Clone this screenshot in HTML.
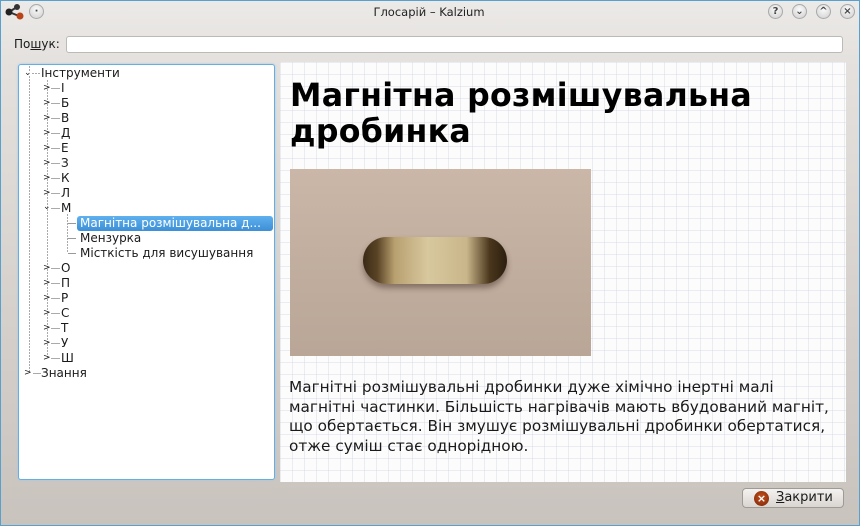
<!DOCTYPE html>
<html><head><meta charset="utf-8"><style>
*{margin:0;padding:0;box-sizing:border-box}
body{width:860px;height:526px;overflow:hidden;font-family:"DejaVu Sans","Liberation Sans",sans-serif;font-size:12px;color:#1a1a1a;position:relative;
background:linear-gradient(#eceae8 0px,#e4e1de 60px,#d6d1cd 300px,#c9c3be 526px)}
.frame{left:0;top:0;width:860px;height:526px;border:1px solid #5aa0cc;pointer-events:none;z-index:9}
.abs{position:absolute}
.tb{top:0;left:0;width:858px;height:24px;text-align:center;line-height:24px;font-size:11.5px;color:#222}
.wb{width:15px;height:15px;border-radius:50%;background:radial-gradient(circle at 50% 35%,#fafafa,#cfcfcf);border:1px solid #a9a9a9;top:4px;font-size:10px;line-height:13px;text-align:center;color:#444;font-weight:bold}
.search{left:66px;top:36px;width:777px;height:17px;background:#fff;border:1px solid #bdb9b5;border-radius:3px}
.tree{left:18px;top:64px;width:257px;height:416px;background:#fff;border:1px solid #67aee0;border-radius:3px;box-shadow:0 0 2px #9cc9ea}
.in{position:absolute;left:0;top:1px;width:255px;height:414px}
.row{position:absolute;height:15px;line-height:15px;font-size:12px;white-space:nowrap}
.arr{position:absolute;font-size:9px;color:#222;line-height:15px}
.sel{background:linear-gradient(#5fb0ee,#3d8fd6);color:#fff;border-radius:3px;padding:0 3px}
.content{left:280px;top:62px;width:566px;height:420px;background-color:#fcfcfd;
background-image:linear-gradient(90deg,rgba(210,210,225,.4) 1px,transparent 1px),linear-gradient(rgba(210,210,225,.4) 1px,transparent 1px);background-size:12px 12px}
h1{position:absolute;left:10px;top:16px;font-size:31.6px;line-height:36px;font-weight:bold;color:#000;font-family:"DejaVu Sans",sans-serif;letter-spacing:0.3px;white-space:nowrap}
.img{left:10px;top:107px;width:301px;height:187px;background:linear-gradient(#cbb7a8,#c1ae9f 50%,#b9a697);overflow:hidden}
.pill{left:73px;top:68px;width:144px;height:47px;border-radius:24px;background:linear-gradient(90deg,#3a2a16 0%,#5a4426 10%,#b8a070 22%,#d8c89e 45%,#c9b68a 72%,#4a361c 88%,#2b1f10 100%);box-shadow:0 4px 6px rgba(60,40,30,.45)}
p{position:absolute;left:9px;top:316px;font-size:15.3px;line-height:19.5px;color:#1a1a1a;white-space:nowrap}
.btn{left:742px;top:488px;width:102px;height:20px;border:1px solid #a09a95;border-radius:4px;background:linear-gradient(#f4f2f0,#d9d5d1);font-size:13px;line-height:18px}
.xi{left:11px;top:2px;width:15px;height:15px;border-radius:50%;background:radial-gradient(circle at 50% 40%,#c5501c,#7a2508);color:#fff;font-size:11px;line-height:15px;text-align:center;font-weight:bold}
</style></head><body>
<div class="abs frame"></div>
<div class="abs tb">Глосарій – Kalzium</div>
<svg class="abs" style="left:5px;top:3px" width="20" height="18"><line x1="4" y1="9" x2="12" y2="4" stroke="#333" stroke-width="2"/><line x1="4" y1="9" x2="14" y2="13" stroke="#333" stroke-width="2"/><circle cx="4" cy="9" r="3.5" fill="#222"/><circle cx="12" cy="4" r="3" fill="#333"/><circle cx="15" cy="13" r="3.5" fill="#b84418"/></svg>
<div class="abs wb" style="left:29px">·</div>
<div class="abs wb" style="left:768px">?</div>
<div class="abs wb" style="left:792px">⌄</div>
<div class="abs wb" style="left:816px">^</div>
<div class="abs wb" style="left:840px">×</div>
<div class="abs" style="left:14px;top:37px;font-size:12px">По<u>ш</u>ук:</div>
<div class="abs search"></div>
<div class="abs tree"><div class="in">
<svg class="abs" style="left:0;top:0" width="257" height="416">
<g stroke="#aaa" stroke-dasharray="2,1" fill="none">
<line x1="10.5" y1="0" x2="10.5" y2="6"/>
<line x1="13" y1="7.5" x2="22" y2="7.5"/>
<line x1="28.5" y1="14" x2="28.5" y2="293"/>
<line x1="10.5" y1="10" x2="10.5" y2="306"/>
<line x1="48.5" y1="148" x2="48.5" y2="186"/>
</g>
<g stroke="#999" fill="none">
<path d="M49 157.5h8M49 172.5h8M49 187.5h8"/>
</g>
<g stroke="#aaa">
<path d="M32 22.5h9M32 37.5h9M32 52.5h9M32 67.5h9M32 82.5h9M32 97.5h9M32 112.5h9M32 127.5h9M32 142.5h9M32 202.5h9M32 217.5h9M32 232.5h9M32 247.5h9M32 262.5h9M32 277.5h9M32 292.5h9M14 307.5h8"/>
</g>
</svg>
<div class="arr" style="left:5px;top:0">⌄</div>
<div class="row" style="left:22px;top:0">Інструменти</div>
<div class="arr" style="left:24px;top:15px">&gt;</div><div class="row" style="left:42px;top:15px">І</div>
<div class="arr" style="left:24px;top:30px">&gt;</div><div class="row" style="left:42px;top:30px">Б</div>
<div class="arr" style="left:24px;top:45px">&gt;</div><div class="row" style="left:42px;top:45px">В</div>
<div class="arr" style="left:24px;top:60px">&gt;</div><div class="row" style="left:42px;top:60px">Д</div>
<div class="arr" style="left:24px;top:75px">&gt;</div><div class="row" style="left:42px;top:75px">Е</div>
<div class="arr" style="left:24px;top:90px">&gt;</div><div class="row" style="left:42px;top:90px">З</div>
<div class="arr" style="left:24px;top:105px">&gt;</div><div class="row" style="left:42px;top:105px">К</div>
<div class="arr" style="left:24px;top:120px">&gt;</div><div class="row" style="left:42px;top:120px">Л</div>
<div class="arr" style="left:24px;top:134px">⌄</div><div class="row" style="left:42px;top:135px">М</div>
<div class="row sel" style="left:58px;top:150px;width:196px">Магнітна розмішувальна д...</div>
<div class="row" style="left:61px;top:165px">Мензурка</div>
<div class="row" style="left:61px;top:180px">Місткість для висушування</div>
<div class="arr" style="left:24px;top:195px">&gt;</div><div class="row" style="left:42px;top:195px">О</div>
<div class="arr" style="left:24px;top:210px">&gt;</div><div class="row" style="left:42px;top:210px">П</div>
<div class="arr" style="left:24px;top:225px">&gt;</div><div class="row" style="left:42px;top:225px">Р</div>
<div class="arr" style="left:24px;top:240px">&gt;</div><div class="row" style="left:42px;top:240px">С</div>
<div class="arr" style="left:24px;top:255px">&gt;</div><div class="row" style="left:42px;top:255px">Т</div>
<div class="arr" style="left:24px;top:270px">&gt;</div><div class="row" style="left:42px;top:270px">У</div>
<div class="arr" style="left:24px;top:285px">&gt;</div><div class="row" style="left:42px;top:285px">Ш</div>
<div class="arr" style="left:5px;top:300px">&gt;</div><div class="row" style="left:22px;top:300px">Знання</div>
</div></div>
<div class="abs content">
<h1>Магнітна розмішувальна<br>дробинка</h1>
<div class="abs img"><div class="abs pill"></div></div>
<p>Магнітні розмішувальні дробинки дуже хімічно інертні малі<br>магнітні частинки. Більшість нагрівачів мають вбудований магніт,<br>що обертається. Він змушує розмішувальні дробинки обертатися,<br>отже суміш стає однорідною.</p>
</div>
<div class="abs btn"><div class="abs xi">×</div><span class="abs" style="left:33px;top:0"><u>З</u>акрити</span></div>
</body></html>
